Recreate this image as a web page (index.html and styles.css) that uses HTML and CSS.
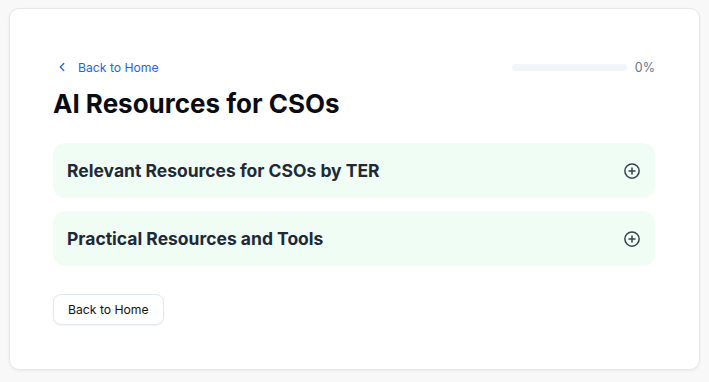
FILE: index.html
```html
<!DOCTYPE html>
<html lang="en">
<head>
    <meta charset="UTF-8">
    <meta name="viewport" content="width=device-width, initial-scale=1.0">
    <title>AI Resources for CSOs</title>
    <link rel="stylesheet" href="styles.css">
</head>
<body>
    <div class="card">
        <div class="top-row">
            <a class="back-link" href="#">
                <svg width="14" height="14" viewBox="0 0 24 24" fill="none" stroke="currentColor" stroke-width="2.2" stroke-linecap="round" stroke-linejoin="round"><path d="M15 18l-6-6 6-6"/></svg>
                <span>Back to Home</span>
            </a>
            <div class="progress">
                <div class="progress-track"><div class="progress-fill" style="width: 0%"></div></div>
                <span class="progress-label">0%</span>
            </div>
        </div>

        <h1>AI Resources for CSOs</h1>

        <div class="accordion">
            <div class="accordion-item">
                <h3>Relevant Resources for CSOs by TER</h3>
                <svg class="plus" width="18" height="18" viewBox="0 0 24 24" fill="none" stroke="currentColor" stroke-width="2" stroke-linecap="round"><circle cx="12" cy="12" r="9.5"/><path d="M12 8v8M8 12h8"/></svg>
            </div>
            <div class="accordion-item">
                <h3>Practical Resources and Tools</h3>
                <svg class="plus" width="18" height="18" viewBox="0 0 24 24" fill="none" stroke="currentColor" stroke-width="2" stroke-linecap="round"><circle cx="12" cy="12" r="9.5"/><path d="M12 8v8M8 12h8"/></svg>
            </div>
        </div>

        <button class="home-btn">Back to Home</button>
    </div>
</body>
</html>
```

FILE: styles.css
```css
body {
    font-family: Inter, "Noto Sans", sans-serif;
    background-color: #f8f8f8;
    margin: 0;
    padding: 8px 9px 12px 9px;
}

.card {
    background-color: #fff;
    border: 1px solid #e5e7eb;
    border-radius: 10px;
    box-shadow: 0 1px 3px rgba(0, 0, 0, 0.06);
    padding: 49px 44px 44px 43px;
}

.top-row {
    display: flex;
    justify-content: space-between;
    align-items: center;
    height: 18px;
}

.back-link {
    display: flex;
    align-items: center;
    gap: 9px;
    color: #2563eb;
    text-decoration: none;
    font-size: 12.2px;
    padding-left: 2px;
}

.progress {
    display: flex;
    align-items: center;
    gap: 8px;
}

.progress-track {
    width: 115px;
    height: 7px;
    background-color: #f1f5f9;
    border-radius: 4px;
}

.progress-fill {
    height: 100%;
    background-color: #22c55e;
    border-radius: 4px;
}

.progress-label {
    font-size: 12.5px;
    color: #64748b;
}

h1 {
    font-size: 26px;
    font-weight: 700;
    color: #0b0b12;
    margin: 11px 0 22px 0;
    line-height: 34px;
}

.accordion {
    display: flex;
    flex-direction: column;
    gap: 13px;
}

.accordion-item {
    display: flex;
    justify-content: space-between;
    align-items: center;
    height: 55px;
    padding: 0 14px;
    background-color: #f0fdf4;
    border-radius: 12px;
}

.accordion-item h3 {
    margin: 0;
    font-size: 17.5px;
    font-weight: 700;
    color: #1f2937;
}

.plus {
    color: #374151;
}

.home-btn {
    margin-top: 28px;
    font-family: Inter, "Noto Sans", sans-serif;
    font-size: 12.2px;
    color: #111;
    background-color: #fff;
    border: 1px solid #e2e8f0;
    border-radius: 8px;
    padding: 0 14px;
    height: 31px;
    box-shadow: 0 1px 2px rgba(0, 0, 0, 0.05);
}
```
